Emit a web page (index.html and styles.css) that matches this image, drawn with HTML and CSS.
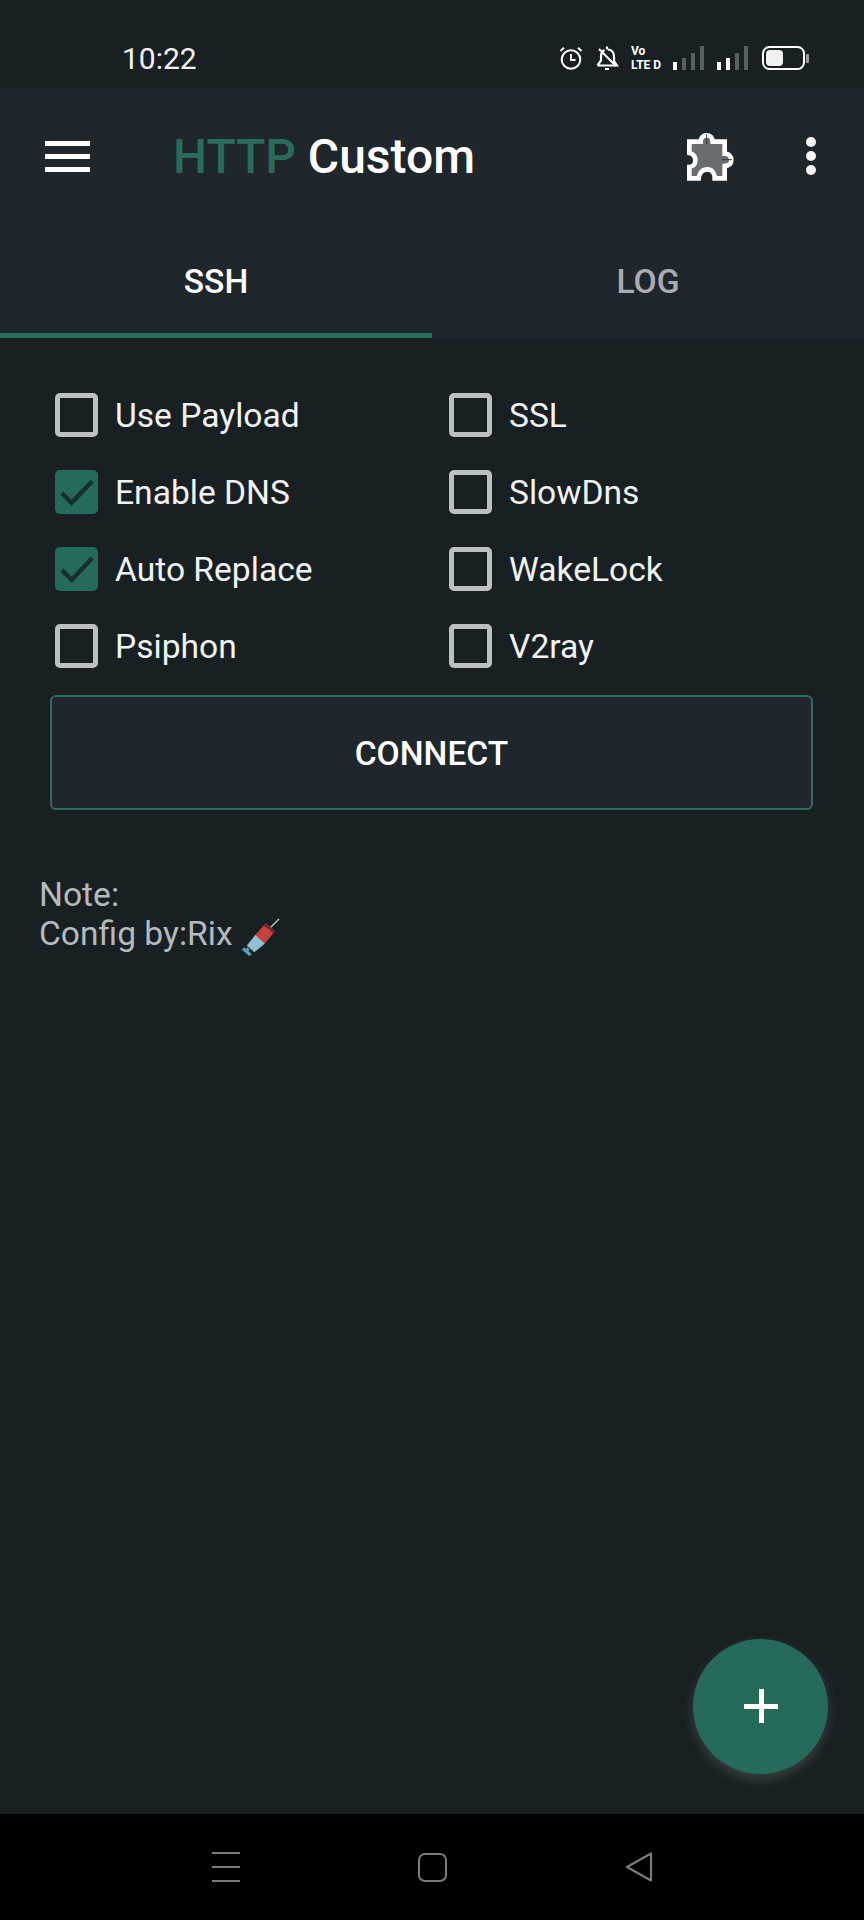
FILE: index.html
```html
<!DOCTYPE html>
<html lang="en">
<head>
  <meta charset="UTF-8">
  <meta name="viewport" content="width=device-width, initial-scale=1.0">
  <title>HTTP Custom</title>
  <link rel="stylesheet" href="styles.css">
</head>
<body>
  <div class="screen">
    <div class="status-bar">
      <span class="time">10:22</span>
      <div class="status-icons">
        <svg class="ic-alarm" viewBox="0 0 24 24" fill="none" stroke="#fff">
          <circle cx="12" cy="13.500" r="9.300" stroke-width="2"/>
          <path d="M12 8v6h4.500" stroke-width="1.800"/>
          <path d="M1.500 5 5 1.800M22.500 5 19 1.800" stroke-width="2"/>
        </svg>
        <svg class="ic-bell" viewBox="0 0 24 24" fill="none" stroke="#fff" stroke-width="2.200">
          <path d="M2.500 19.500 6 14.500V10.500C6 7 7.500 5 9.500 4M13 3.500c4 .5 6 3 6 7V15l3 4.500H2.500"/>
          <path d="M4 3 21 20"/>
          <path d="M12 .5v3M10 23h4"/>
        </svg>
        <div class="volte"><span>Vo</span><span>LTE D</span></div>
        <svg class="ic-signal" viewBox="0 0 31 24">
          <rect x="0" y="16" width="4" height="8" fill="#fff"/>
          <rect x="9" y="12" width="4" height="12" fill="#5a5f62"/>
          <rect x="18" y="7" width="4" height="17" fill="#5a5f62"/>
          <rect x="27" y="0" width="4" height="24" fill="#5a5f62"/>
        </svg>
        <svg class="ic-signal" viewBox="0 0 31 24">
          <rect x="0" y="16" width="4" height="8" fill="#fff"/>
          <rect x="9" y="12" width="4" height="12" fill="#fff"/>
          <rect x="18" y="7" width="4" height="17" fill="#5a5f62"/>
          <rect x="27" y="0" width="4" height="24" fill="#5a5f62"/>
        </svg>
        <svg class="ic-battery" viewBox="0 0 47 24">
          <rect x="1" y="1" width="41" height="22" rx="6.500" fill="none" stroke="#fff" stroke-width="2"/>
          <rect x="4" y="4" width="17" height="16" rx="4" fill="#f1f1f1"/>
          <rect x="44" y="8" width="3" height="9" rx="1" fill="#9a9c9e"/>
        </svg>
      </div>
    </div>

    <header class="appbar">
      <div class="toolbar">
        <div class="hamburger"><i></i><i></i><i></i></div>
        <h1 class="title"><span class="title-green">HTTP</span> Custom</h1>
        <svg class="ic-puzzle" viewBox="45 30 150 150">
          <path d="M58 62H92C92 50 100 43 110 43C120 43 128 50 128 62H164V98C176 98 184 105 184 118C184 128 176 135 164 135V172H134C134 155 125 145 112 145C98 145 88 155 86 172H58V138C70 138 76 128 76 118C76 105 68 98 58 96Z" fill="#696c70" stroke="#fff" stroke-width="14"/>
          <path d="M110 40V70M155 116H186" stroke="#3a3f44" stroke-width="3"/>
        </svg>
        <div class="kebab"><i></i><i></i><i></i></div>
      </div>
      <nav class="tabs">
        <div class="tab active">SSH</div>
        <div class="tab">LOG</div>
      </nav>
    </header>

    <main class="content">
      <div class="options">
        <label class="option"><span class="box"></span>Use Payload</label>
        <label class="option"><span class="box"></span>SSL</label>
        <label class="option">
          <span class="box checked"><svg viewBox="0 0 44 44" fill="none" stroke="#17302e" stroke-width="4.500"><path d="M7 23 17 33 38 11"/></svg></span>Enable DNS
        </label>
        <label class="option"><span class="box"></span>SlowDns</label>
        <label class="option">
          <span class="box checked"><svg viewBox="0 0 44 44" fill="none" stroke="#17302e" stroke-width="4.500"><path d="M7 23 17 33 38 11"/></svg></span>Auto Replace
        </label>
        <label class="option"><span class="box"></span>WakeLock</label>
        <label class="option"><span class="box"></span>Psiphon</label>
        <label class="option"><span class="box"></span>V2ray</label>
      </div>
      <button class="connect">CONNECT</button>
      <p class="note">Note:<br>Config by:Rix
        <svg class="ic-syringe" viewBox="0 0 40 40">
          <path d="M27 13 39 1" stroke="#b9c4c8" stroke-width="1.500"/>
          <path d="M13 19 23 8 33 16 23 28z" fill="#c8413f"/>
          <path d="M24 6 34 15" stroke="#7a2c2e" stroke-width="3"/>
          <path d="M5 29 14 18 24 27 13 36z" fill="#8fc3d1"/>
          <path d="M1 32 9 39M4 35 7 32" stroke="#5d9db2" stroke-width="3.500"/>
        </svg>
      </p>
    </main>

    <button class="fab"><i class="plus"></i></button>

    <footer class="nav-bar">
      <div class="nav-menu"><i></i><i></i><i></i></div>
      <div class="nav-home"></div>
      <svg class="nav-back" viewBox="0 0 28 30" fill="none" stroke="#7b7b7b" stroke-width="2.200" stroke-linejoin="round">
        <path d="M2 15 26 1.500V28.500z"/>
      </svg>
    </footer>
  </div>
</body>
</html>
```

FILE: styles.css
```css
* {
  box-sizing: border-box;
}
body {
  margin: 0;
  font-family: Roboto, "Liberation Sans", sans-serif;
  background-color: #192023;
  color: #fff;
}
.screen {
  position: relative;
  display: flex;
  flex-direction: column;
  width: 864px;
  height: 1920px;
  overflow: hidden;
}

/* status bar */
.status-bar {
  display: flex;
  align-items: center;
  height: 88px;
  padding: 28px 55px 0 122px;
  background: #192023;
}
.time {
  font-size: 30px;
  color: #f2f2f2;
}
.status-icons {
  display: flex;
  align-items: center;
  margin-left: auto;
}
.status-icons svg {
  display: block;
  height: 24px;
}
.ic-alarm {
  width: 24px;
}
.ic-bell {
  width: 24px;
  margin-left: 12px;
}
.volte {
  display: flex;
  flex-direction: column;
  width: 29px;
  margin-left: 12px;
  font-family: "Liberation Sans Narrow", Roboto, sans-serif;
  font-weight: 700;
  font-size: 12px;
  line-height: 14px;
  white-space: nowrap;
}
.ic-signal {
  width: 31px;
  margin-left: 13px;
}
.ic-battery {
  width: 47px;
  margin-left: 14px;
}

/* app bar */
.appbar {
  height: 250px;
  background: #1f262c;
}
.toolbar {
  display: flex;
  align-items: center;
  height: 136px;
  padding: 0 45px;
}
.hamburger {
  display: flex;
  flex-direction: column;
  gap: 8px;
  width: 45px;
}
.hamburger i {
  height: 5px;
  background: #fff;
}
.title {
  flex: 1;
  margin: 0 0 0 83px;
  font-size: 48px;
  font-weight: 500;
}
.title-green {
  color: #2a6b5c;
}
.ic-puzzle {
  width: 50px;
  height: 50px;
  margin-right: 71px;
}
.kebab {
  display: flex;
  flex-direction: column;
  gap: 4px;
  margin-right: 3px;
}
.kebab i {
  width: 10px;
  height: 10px;
  border-radius: 50%;
  background: #f4f4f6;
}
.tabs {
  display: flex;
  height: 114px;
}
.tab {
  display: flex;
  align-items: center;
  justify-content: center;
  flex: 1;
  font-size: 33.6px;
  font-weight: 500;
  color: #a9adb3;
}
.tab.active {
  color: #fff;
  border-bottom: 5px solid #2a6b5c;
  padding-top: 5px;
}

/* options */
.content {
  padding: 38px 50px 0 39px;
}
.options {
  display: grid;
  grid-template-columns: 394px 1fr;
  grid-auto-rows: 77px;
  padding-left: 16px;
}
.option {
  display: flex;
  align-items: center;
  gap: 17px;
  padding-top: 2px;
  font-size: 33.6px;
  color: #f1f3f4;
}
.box {
  width: 43px;
  height: 44px;
  margin-top: -2px;
  border: 5px solid #bcc0c3;
  border-radius: 5px;
}
.box.checked {
  border: 0;
  background: #246b5c;
}
.box svg {
  display: block;
  width: 100%;
  height: 100%;
}
.connect {
  display: block;
  width: 763px;
  height: 115px;
  margin: 11px 0 0 11px;
  padding: 2px 0 0;
  background: #1f262c;
  border: 2px solid #2f6b5e;
  border-radius: 6px;
  font-family: inherit;
  font-size: 33.6px;
  font-weight: 500;
  color: #fff;
}
.note {
  margin: 65px 0 0;
  font-size: 33.6px;
  line-height: 39px;
  color: #b4babd;
}
.ic-syringe {
  width: 38px;
  height: 38px;
  margin: -10px 0 -10px 1px;
  vertical-align: -1px;
}

/* floating button */
.fab {
  position: absolute;
  left: 693px;
  top: 1639px;
  width: 135px;
  height: 135px;
  padding: 0;
  border: 0;
  border-radius: 50%;
  background: #256a5a;
  box-shadow: 0 5px 12px rgba(150, 150, 150, 0.28);
}
.plus {
  position: absolute;
  left: 51px;
  top: 50px;
  width: 34px;
  height: 34px;
  background:
    linear-gradient(#fff, #fff) center / 100% 5px no-repeat,
    linear-gradient(#fff, #fff) center / 5px 100% no-repeat;
}

/* system navigation */
.nav-bar {
  display: flex;
  align-items: center;
  margin-top: auto;
  height: 106px;
  padding: 39px 0 39px 212px;
  background: #000;
}
.nav-menu {
  display: flex;
  flex-direction: column;
  justify-content: space-between;
  width: 28px;
  height: 30px;
}
.nav-menu i {
  height: 2px;
  background: #7b7b7b;
}
.nav-home {
  width: 29px;
  height: 29px;
  margin-left: 178px;
  border: 2px solid #7b7b7b;
  border-radius: 7px;
}
.nav-back {
  width: 28px;
  height: 30px;
  margin-left: 178px;
}
```
